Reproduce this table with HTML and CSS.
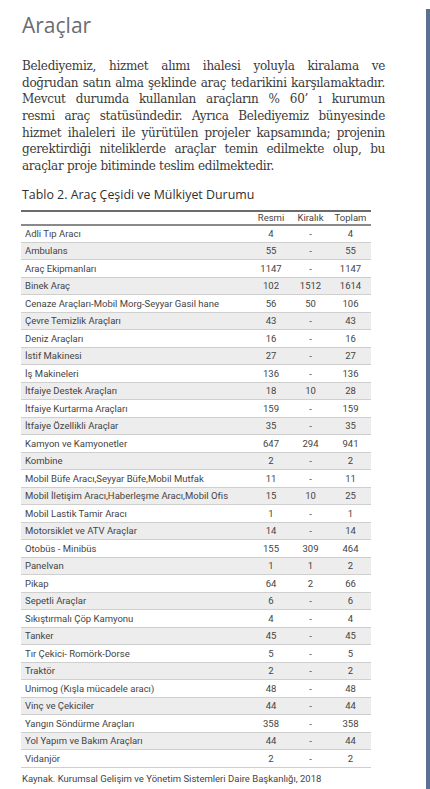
FILE: index.html
```html
<!DOCTYPE html>
<html lang="tr">
<head>
<meta charset="utf-8">
<title>Araçlar</title>
<link rel="stylesheet" href="styles.css">
</head>
<body>
<div class="page">
  <main class="content">
    <h1 class="title">Araçlar</h1>
    <p class="intro">
      <span class="ln">Belediyemiz, hizmet alımı ihalesi yoluyla kiralama ve</span>
      <span class="ln">doğrudan satın alma şeklinde araç tedarikini karşılamaktadır.</span>
      <span class="ln">Mevcut durumda kullanılan araçların % 60’ ı kurumun</span>
      <span class="ln">resmi araç statüsündedir. Ayrıca Belediyemiz bünyesinde</span>
      <span class="ln">hizmet ihaleleri ile yürütülen projeler kapsamında; projenin</span>
      <span class="ln">gerektirdiği niteliklerde araçlar temin edilmekte olup, bu</span>
      <span class="ln last">araçlar proje bitiminde teslim edilmektedir.</span>
    </p>
    <h2 class="tcap">Tablo 2. Araç Çeşidi ve Mülkiyet Durumu</h2>
    <table class="tbl">
      <thead>
        <tr><th class="name"></th><th>Resmi</th><th>Kiralık</th><th>Toplam</th></tr>
      </thead>
      <tbody>
        <tr><td class="name">Adli Tıp Aracı</td><td>4</td><td>-</td><td>4</td></tr>
        <tr><td class="name">Ambulans</td><td>55</td><td>-</td><td>55</td></tr>
        <tr><td class="name">Araç Ekipmanları</td><td>1147</td><td>-</td><td>1147</td></tr>
        <tr><td class="name">Binek Araç</td><td>102</td><td>1512</td><td>1614</td></tr>
        <tr><td class="name">Cenaze Araçları-Mobil Morg-Seyyar Gasil hane</td><td>56</td><td>50</td><td>106</td></tr>
        <tr><td class="name">Çevre Temizlik Araçları</td><td>43</td><td>-</td><td>43</td></tr>
        <tr><td class="name">Deniz Araçları</td><td>16</td><td>-</td><td>16</td></tr>
        <tr><td class="name">İstif Makinesi</td><td>27</td><td>-</td><td>27</td></tr>
        <tr><td class="name">İş Makineleri</td><td>136</td><td>-</td><td>136</td></tr>
        <tr><td class="name">İtfaiye Destek Araçları</td><td>18</td><td>10</td><td>28</td></tr>
        <tr><td class="name">İtfaiye Kurtarma Araçları</td><td>159</td><td>-</td><td>159</td></tr>
        <tr><td class="name">İtfaiye Özellikli Araçlar</td><td>35</td><td>-</td><td>35</td></tr>
        <tr><td class="name">Kamyon ve Kamyonetler</td><td>647</td><td>294</td><td>941</td></tr>
        <tr><td class="name">Kombine</td><td>2</td><td>-</td><td>2</td></tr>
        <tr><td class="name">Mobil Büfe Aracı,Seyyar Büfe,Mobil Mutfak</td><td>11</td><td>-</td><td>11</td></tr>
        <tr><td class="name">Mobil İletişim Aracı,Haberleşme Aracı,Mobil Ofis</td><td>15</td><td>10</td><td>25</td></tr>
        <tr><td class="name">Mobil Lastik Tamir Aracı</td><td>1</td><td>-</td><td>1</td></tr>
        <tr><td class="name">Motorsiklet ve ATV Araçlar</td><td>14</td><td>-</td><td>14</td></tr>
        <tr><td class="name">Otobüs - Minibüs</td><td>155</td><td>309</td><td>464</td></tr>
        <tr><td class="name">Panelvan</td><td>1</td><td>1</td><td>2</td></tr>
        <tr><td class="name">Pikap</td><td>64</td><td>2</td><td>66</td></tr>
        <tr><td class="name">Sepetli Araçlar</td><td>6</td><td>-</td><td>6</td></tr>
        <tr><td class="name">Sıkıştırmalı Çöp Kamyonu</td><td>4</td><td>-</td><td>4</td></tr>
        <tr><td class="name">Tanker</td><td>45</td><td>-</td><td>45</td></tr>
        <tr><td class="name">Tır Çekici- Romörk-Dorse</td><td>5</td><td>-</td><td>5</td></tr>
        <tr><td class="name">Traktör</td><td>2</td><td>-</td><td>2</td></tr>
        <tr><td class="name">Unimog (Kışla mücadele aracı)</td><td>48</td><td>-</td><td>48</td></tr>
        <tr><td class="name">Vinç ve Çekiciler</td><td>44</td><td>-</td><td>44</td></tr>
        <tr><td class="name">Yangın Söndürme Araçları</td><td>358</td><td>-</td><td>358</td></tr>
        <tr><td class="name">Yol Yapım ve Bakım Araçları</td><td>44</td><td>-</td><td>44</td></tr>
        <tr><td class="name">Vidanjör</td><td>2</td><td>-</td><td>2</td></tr>
      </tbody>
    </table>
    <p class="source">Kaynak. Kurumsal Gelişim ve Yönetim Sistemleri Daire Başkanlığı, 2018</p>
  </main>
  <div class="edge"></div>
</div>
</body>
</html>
```

FILE: styles.css
```css
* { box-sizing: border-box; }
html, body { margin: 0; padding: 0; background: #ffffff; }
.page {
  display: flex;
  width: 430px;
  height: 789px;
  overflow: hidden;
}
.content {
  flex: 1;
  padding: 12px 0 0 22px;
}
.edge {
  width: 4px;
  margin-top: 9px;
  background: #5b7190;
}
.title {
  margin: 0;
  font-family: "Open Sans", sans-serif;
  font-weight: 400;
  font-size: 21px;
  line-height: 26px;
  color: #696d71;
}
.intro {
  margin: 20px 0 0 0;
  width: 363px;
  font-family: "DejaVu Serif", serif;
  font-size: 12px;
  letter-spacing: -0.3px;
  line-height: 16.67px;
  color: #3a3a3a;
}
.ln {
  display: block;
  text-align: justify;
  text-align-last: justify;
  white-space: nowrap;
}
.ln.last { text-align-last: left; }
.tcap {
  margin: 12px 0 0 0;
  font-family: "Open Sans", sans-serif;
  font-weight: 400;
  font-size: 12.4px;
  line-height: 16px;
  color: #2f2f2f;
}
.tbl {
  margin: 7px 0 0 -1px;
  width: 350px;
  border-collapse: collapse;
  font-family: "Liberation Sans Narrow", "Roboto", sans-serif;
  font-size: 9.5px;
  color: #444;
}
.tbl thead tr {
  border-top: 2px solid #6b6b6b;
  border-bottom: 2px solid #8a8a8a;
}
.tbl th {
  height: 14px;
  font-weight: 400;
  padding: 0;
  text-align: center;
}
.tbl td {
  height: 17.5px;
  padding: 0;
  text-align: center;
}
.tbl tbody tr { border-bottom: 1px solid #cfcfcf; }
.tbl tbody tr:nth-child(even) { background: #ededed; }
.tbl .name { text-align: left; padding-left: 4px; width: 230px; }
.tbl th:nth-child(2), .tbl td:nth-child(2) { width: 40px; }
.tbl th:nth-child(3), .tbl td:nth-child(3) { width: 39px; }
.tbl th:nth-child(4), .tbl td:nth-child(4) { width: 41px; }
.source {
  margin: 5px 0 0 0;
  font-family: "Liberation Sans Narrow", "Roboto", sans-serif;
  font-size: 9.5px;
  color: #444;
}
```
